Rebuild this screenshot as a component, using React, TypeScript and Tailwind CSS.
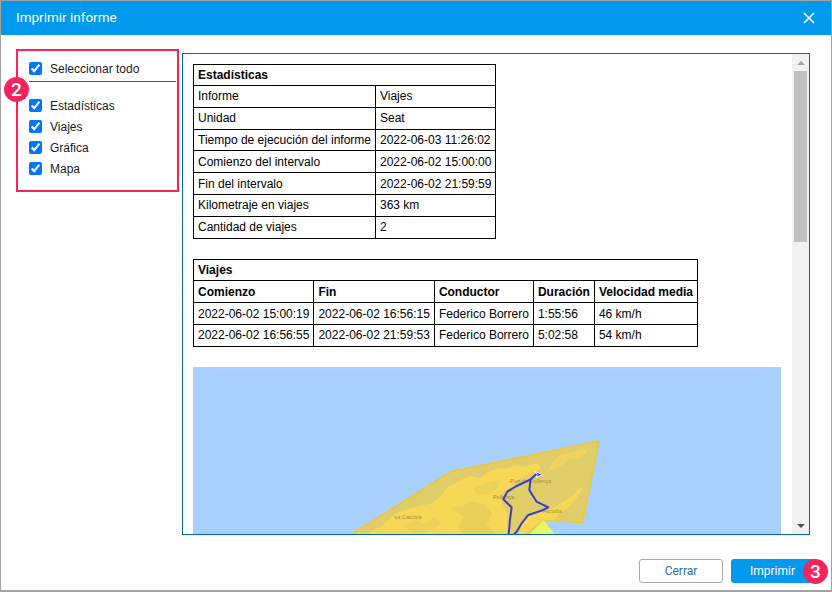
const stats = [
  ["Informe", "Viajes"],
  ["Unidad", "Seat"],
  ["Tiempo de ejecución del informe", "2022-06-03 11:26:02"],
  ["Comienzo del intervalo", "2022-06-02 15:00:00"],
  ["Fin del intervalo", "2022-06-02 21:59:59"],
  ["Kilometraje en viajes", "363 km"],
  ["Cantidad de viajes", "2"],
];

const trips = [
  ["2022-06-02 15:00:19", "2022-06-02 16:56:15", "Federico Borrero", "1:55:56", "46 km/h"],
  ["2022-06-02 16:56:55", "2022-06-02 21:59:53", "Federico Borrero", "5:02:58", "54 km/h"],
];

const tripHeaders = ["Comienzo", "Fin", "Conductor", "Duración", "Velocidad media"];
const options = ["Estadísticas", "Viajes", "Gráfica", "Mapa"];

const cell = "border border-black px-1 h-[21.8px] py-0 text-left align-middle whitespace-nowrap";
const firstCell = "border border-black px-1 h-[21px] py-0 text-left align-middle whitespace-nowrap";

const Badge = ({ n, className }: { n: number; className: string }) => (
  <span
    className={`absolute flex items-center justify-center w-[25px] h-[25px] rounded-full bg-[#f5245e] text-white text-[19px] font-medium leading-none font-['Roboto',sans-serif] ${className}`}
  >
    {n}
  </span>
);

const Option = ({ label }: { label: string }) => (
  <label className="flex items-center gap-2 h-[21px]">
    <input type="checkbox" defaultChecked />
    <span>{label}</span>
  </label>
);

const MapPreview = () => (
  <svg className="block w-[588px] h-[300px]" viewBox="193 367 588 300" fontFamily="Arial, 'Liberation Sans', sans-serif">
    <rect x="193" y="367" width="588" height="300" fill="#a8d0ff" />
    <g transform="translate(340 430) scale(0.3333)">
      <polygon points="777,33 333,125 35,312 20,330 560,330 610,270 728,278" fill="#e0cc68" stroke="#f9c710" strokeWidth="3.5" />
      <path
        d="M62,330 L100,300 L125,290 L150,266 L175,246 L205,236 L240,228 L280,218 L300,200 L322,172 L350,156 L390,138 L420,144 L445,126 L470,114 L498,116 L520,106 L555,110 L590,98 L603,112 L585,128 L560,136 L535,150 L510,170 L482,196 L488,222 L503,250 L500,330 Z"
        fill="#f6d856"
      />
      <path d="M622,126 L640,92 L665,72 L700,66 L745,55 L738,72 L712,88 L690,86 L665,108 L640,118 Z" fill="#efd35c" />
      <path d="M733,170 L715,176 L700,196 L668,215 L640,233 L605,240 L572,250 L548,272 L530,330 L570,300 L610,268 L640,272 L660,250 L690,230 L712,200 Z" fill="#f6d856" />
      <path d="M330,232 L370,228 L392,212 L430,222 L455,250 L440,285 L470,310 L430,330 L375,330 L355,290 L372,262 Z" fill="#e8cf58" />
      <path d="M190,290 L225,270 L250,282 L285,262 L300,280 L270,305 L225,312 Z" fill="#ebd158" />
      <path d="M400,175 L440,160 L480,150 L475,175 L445,190 L410,195 Z" fill="#ebd158" />
      <polygon points="610,270 552,330 660,330" fill="#e8f75c" />
      <g fill="#a88f3c" fontSize="17">
        <text x="510" y="160">Port de Pollença</text>
        <text x="458" y="206">Pollença</text>
        <text x="610" y="249">Alcúdia</text>
        <text x="163" y="266">sa Calobra</text>
      </g>
      <g fill="none" stroke="#3c3ccf" strokeWidth="6" strokeLinejoin="round" strokeLinecap="round">
        <path d="M590,132 L572,148 L568,180 L590,215 L625,232 L610,240 L565,255 L545,280 L530,305 L515,320" />
        <path d="M572,148 L530,168 L502,185 L490,208 L515,232 L510,270 L505,325" />
      </g>
      <polygon points="584,124 608,134 588,142 592,133" fill="#3c3ccf" stroke="#ffffff" strokeWidth="2.5" />
    </g>
  </svg>
);

const App = () => {
  return (
    <div className="w-[832px] h-[592px] bg-white flex flex-col border border-[#a3a3a3] border-b-2 font-['Liberation_Sans',Arial,sans-serif] text-xs text-[#1a1a1a] overflow-hidden">
      <header className="h-[34px] bg-[#0099ee] flex items-center justify-between pl-[15px] pr-[16px] text-white shrink-0">
        <h1 className="text-[13.5px] font-normal font-['Roboto',sans-serif]">Imprimir informe</h1>
        <svg width="12" height="12" viewBox="0 0 12 12" stroke="currentColor" strokeWidth="1.5" fill="none">
          <path d="M1 1 L11 11 M11 1 L1 11" />
        </svg>
      </header>

      <main className="flex-1 flex pt-[14px] pl-[15px] min-h-0">
        <aside className="relative w-[163px] h-[143px] border-2 border-[#f5245e] pl-[11px] pr-[1px] pt-[7px] shrink-0">
          <Badge n={2} className="left-[-14px] top-[26px]" />
          <div className="border-b border-[#006da8] h-[24px]">
            <Option label="Seleccionar todo" />
          </div>
          <div className="mt-[13px]">
            {options.map((o) => (
              <Option key={o} label={o} />
            ))}
          </div>
        </aside>

        <section className="ml-[3px] mt-[4px] w-[628px] h-[482px] border border-[#006da8] flex overflow-hidden shrink-0">
          <div className="flex-1 pl-[10px] pt-[10px] overflow-hidden text-black">
            <table className="border-collapse w-[303px]">
              <tbody>
                <tr>
                  <th colSpan={2} className={firstCell}>Estadísticas</th>
                </tr>
                {stats.map(([k, v]) => (
                  <tr key={k}>
                    <td className={`${cell} w-[182px]`}>{k}</td>
                    <td className={cell}>{v}</td>
                  </tr>
                ))}
              </tbody>
            </table>

            <table className="border-collapse w-[505px] mt-[20px]">
              <tbody>
                <tr>
                  <th colSpan={5} className={cell}>Viajes</th>
                </tr>
                <tr>
                  {tripHeaders.map((h) => (
                    <th key={h} className={cell}>{h}</th>
                  ))}
                </tr>
                {trips.map((t) => (
                  <tr key={t[0]}>
                    {t.map((v, i) => (
                      <td key={i} className={cell}>{v}</td>
                    ))}
                  </tr>
                ))}
              </tbody>
            </table>

            <div className="mt-[20px] w-[588px]">
              <MapPreview />
            </div>
          </div>

          <div className="w-[17px] bg-[#f1f1f1] flex flex-col items-center shrink-0">
            <div className="h-[17px] flex items-center justify-center">
              <div className="w-0 h-0 border-x-[4px] border-x-transparent border-b-[4px] border-b-[#a3a3a3]" />
            </div>
            <div className="w-[13px] h-[171px] bg-[#c1c1c1]" />
            <div className="mt-auto h-[17px] flex items-center justify-center">
              <div className="w-0 h-0 border-x-[4px] border-x-transparent border-t-[4px] border-t-[#505050]" />
            </div>
          </div>
        </section>
      </main>

      <footer className="h-[55px] shrink-0 flex items-start justify-end gap-2 pt-[24px] pr-[15px] font-['Roboto',sans-serif]">
        <button className="w-[84px] h-[24px] rounded-[3px] border border-[#a9a9a9] text-[#2a6ca8] bg-white">Cerrar</button>
        <div className="relative">
          <button className="w-[85px] h-[24px] rounded-[3px] bg-[#0099ee] text-white pr-[2px]">Imprimir</button>
          <Badge n={3} className="right-[-12px] top-0" />
        </div>
      </footer>
    </div>
  );
};

export default App;
